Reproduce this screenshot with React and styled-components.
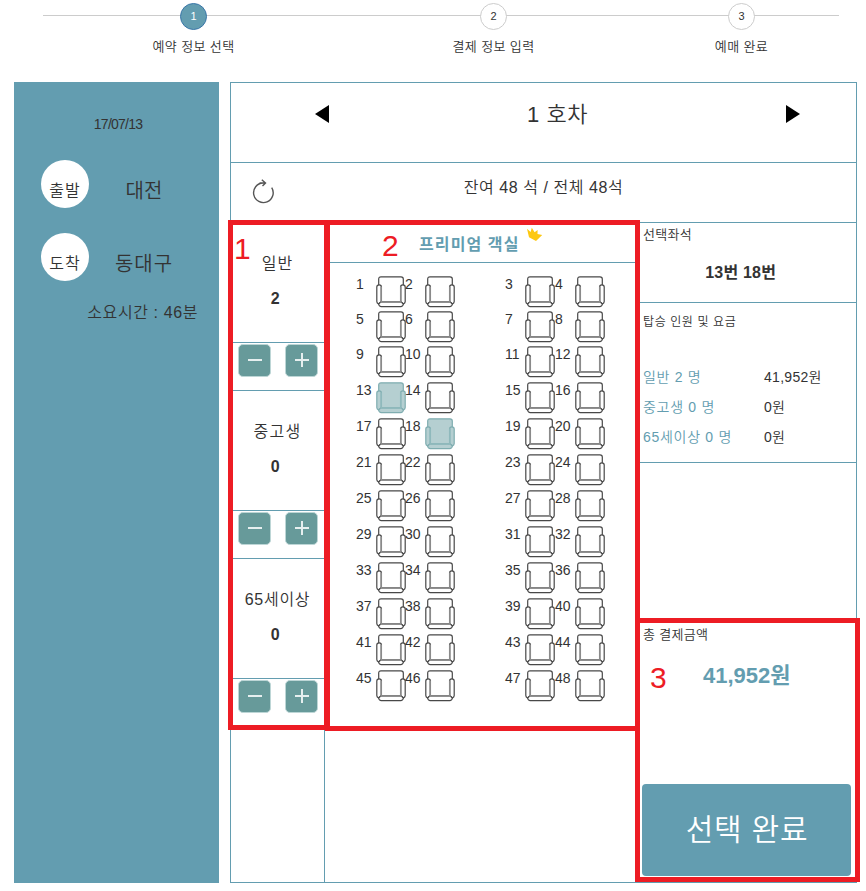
import React from "react";
import styled, { createGlobalStyle } from "styled-components";

const TEAL = "#639db0";
const RED = "#ed1c24";

const Global = createGlobalStyle`
  * { box-sizing: border-box; }
  body {
    margin: 0;
    background: #fff;
    color: #333;
    font-family: "Liberation Sans", "Noto Sans CJK KR", sans-serif;
    font-size: 14px;
    font-weight: 350;
  }
`;

const Page = styled.div`
  position: relative;
  width: 866px;
  height: 891px;
  overflow: hidden;
`;

const Label = styled.div`
  font-size: ${(p) => p.$size || 13}px;
  line-height: ${(p) => p.$line || 20}px;
  letter-spacing: ${(p) => p.$track || 0}px;
  font-weight: ${(p) => (p.$bold ? 700 : 350)};
  color: ${(p) => p.$color || "#333"};
  text-align: ${(p) => p.$align || "left"};
  white-space: pre;
`;

/* Progress steps */
const Stepper = styled.header`
  display: grid;
  grid-template-columns: 301px 299px 197px;
  height: 82px;
  margin: 0 26px 0 43px;
  padding-top: 3px;
  background: linear-gradient(#ccc, #ccc) 0 15px / 796px 1px no-repeat;
`;
const Step = styled.div`
  display: flex;
  flex-direction: column;
  align-items: center;
  gap: 7px;
`;
const StepDot = styled.div`
  width: 27px;
  height: 27px;
  border-radius: 50%;
  border: 1px solid ${(p) => (p.$active ? "#3a76a8" : "#ccc")};
  background: ${(p) => (p.$active ? TEAL : "#fff")};
  color: ${(p) => (p.$active ? "#fff" : "#333")};
  font-size: 11px;
  line-height: 25px;
  text-align: center;
`;

/* Body */
const Body = styled.main`
  display: flex;
  gap: 11px;
  margin-left: 14px;
  height: 801px;
`;
const Sidebar = styled.aside`
  width: 205px;
  background: ${TEAL};
  padding-top: 32px;
`;
const Stop = styled.div`
  display: flex;
  margin: ${(p) => p.$top}px 0 0 27px;
  height: 48px;
`;
const StopBadge = styled.div`
  width: 48px;
  height: 48px;
  border-radius: 50%;
  background: #fff;
  padding-top: 21px;
`;
const StopName = styled.div`
  width: 110px;
  padding-top: 19px;
`;
const Duration = styled.div`
  margin: 20px 21px 0 0;
`;

const Panel = styled.section`
  width: 627px;
  border: 1px solid ${TEAL};
  display: flex;
  flex-direction: column;
`;
const CarBar = styled.div`
  display: flex;
  justify-content: space-between;
  height: 80px;
  padding: 22px 56px 0 84px;
  border-bottom: 1px solid ${TEAL};
`;
const CarName = styled.div`
  padding-top: 1px;
`;
const Arrow = styled.svg`
  width: 14px;
  height: 18px;
`;
const SeatSummary = styled.div`
  display: flex;
  height: 60px;
  border-bottom: 1px solid ${TEAL};
  padding: 15px 0 0 20px;
`;
const RefreshIcon = styled.svg`
  width: 24px;
  height: 28px;
  margin-top: -1px;
`;
const SummaryText = styled.div`
  width: 537px;
`;
const Columns = styled.div`
  display: grid;
  grid-template-columns: 94px 314px 1fr;
  flex: 1;
`;
const PassengerCol = styled.div`
  border-right: 1px solid ${TEAL};
`;
const Passenger = styled.div`
  height: 120px;
  padding: 30px 0 0;
  border-bottom: 1px solid ${TEAL};
`;
const CounterRow = styled.div`
  display: flex;
  gap: 14px;
  height: 48px;
  padding: 1px 0 0 7px;
  border-bottom: 1px solid ${TEAL};
`;
const CounterButton = styled.button`
  width: 33px;
  height: 33px;
  border: 1px solid #bdd6d6;
  border-radius: 5px;
  background: #679a9a;
  padding: 0 0 1px;
  display: grid;
  place-items: center;
`;
const CarCol = styled.div`
  border-right: 1px solid ${TEAL};
`;
const CarTitle = styled.div`
  display: flex;
  height: 40px;
  padding: 12px 0 0 94px;
  gap: 7px;
  border-bottom: 1px solid ${TEAL};
`;
const Crown = styled.svg`
  width: 18px;
  height: 16px;
  margin-top: -8px;
`;
const SeatGrid = styled.div`
  display: grid;
  grid-template-columns: 49px 100px 50px 50px;
  grid-template-rows: 35px 35px repeat(10, 36px);
  padding: 13px 0 0 31px;
`;
const SeatCell = styled.div`
  display: grid;
  grid-template-columns: 20px 30px;
  height: 32px;
  font-size: 14px;
  line-height: 17px;
`;
const SeatSvg = styled.svg`
  width: 30px;
  height: 32px;
`;

const InfoCol = styled.div`
  display: flex;
  flex-direction: column;
`;
const Block = styled.div`
  height: ${(p) => p.$h}px;
  padding: ${(p) => p.$top || 2}px 0 0 4px;
  border-bottom: ${(p) => (p.$line ? `1px solid ${TEAL}` : "0")};
`;
const PickedSeats = styled.div`
  margin-right: 13px;
`;
const FareRow = styled.div`
  display: grid;
  grid-template-columns: 121px 1fr;
  height: 30px;
`;
const Fares = styled.div`
  padding-top: 29px;
`;
const Total = styled.div`
  padding: 16px 0 0 60px;
`;
const Submit = styled.button`
  display: block;
  width: 209px;
  height: 92px;
  margin: 0 0 0 3px;
  padding: 0 0 0 1px;
  border: 0;
  border-radius: 4px;
  background: ${TEAL};
  font-family: inherit;
`;

/* Callouts lie over the page */
const Callout = styled.div`
  position: absolute;
  left: ${(p) => p.$x}px;
  top: ${(p) => p.$y}px;
  width: ${(p) => p.$w}px;
  height: ${(p) => p.$h}px;
  border: 5px solid ${RED};
  pointer-events: none;
`;
const CalloutNumber = styled.span`
  position: absolute;
  left: ${(p) => p.$x}px;
  top: ${(p) => p.$y}px;
  color: ${RED};
  font-size: 30px;
  line-height: 30px;
`;

const Seat = ({ n }) => {
  const taken = n === 13 || n === 18;
  const dark = taken ? "#7fadb0" : "#484848";
  const soft = taken ? "#8fb9bc" : "#8a8a8a";
  const fill = taken ? "#b5cfd1" : "#fff";
  return (
    <SeatCell>
      <span>{n}</span>
      <SeatSvg viewBox="0 0 30 32" fill={fill} stroke={dark} strokeWidth="1.2">
        <path d="M2.7 9V3Q2.7.8 5 .8H25Q27.3.8 27.3 3V27H2.7Z" />
        <path d="M5.4 25.4V11Q5.4 8.8 3.2 8.8Q.8 8.8.8 11V25.5Q.8 27 2.5 28L5.4 25.4Z" />
        <path d="M24.6 25.4V11Q24.6 8.8 26.8 8.8Q29.2 8.8 29.2 11V25.5Q29.2 27 27.5 28L24.6 25.4Z" />
        <path d="M5 25.9H25L27.4 28Q27 30.6 24.7 30.6H5.3Q3 30.6 2.6 28Z" />
        <path d="M5.2 10.5V26H24.8V10.5" fill="none" stroke={soft} strokeWidth="1.7" />
      </SeatSvg>
    </SeatCell>
  );
};

const PASSENGERS = [
  { name: "일반", count: 2, track: 1, price: "41,952원" },
  { name: "중고생", count: 0, track: 1.2, price: "0원" },
  { name: "65세이상", count: 0, track: 0.7, price: "0원" },
];
const STEPS = ["예약 정보 선택", "결제 정보 입력", "예매 완료"];

export default function App() {
  return (
    <Page>
      <Global />
      <Stepper>
        {STEPS.map((s, i) => (
          <Step key={s}>
            <StepDot $active={i === 0}>{i + 1}</StepDot>
            <Label $track={0.4}>{s}</Label>
          </Step>
        ))}
      </Stepper>
      <Body>
        <Sidebar>
          <Label $size={14} $align="center" $track={-0.75}>{" 17/07/13"}</Label>
          <Stop $top={26}>
            <StopBadge><Label $size={16} $align="center" $track={1}>출발</Label></StopBadge>
            <StopName><Label $size={20} $line={24} $align="center">대전</Label></StopName>
          </Stop>
          <Stop $top={25}>
            <StopBadge><Label $size={16} $align="center" $track={1}>도착</Label></StopBadge>
            <StopName><Label $size={20} $line={24} $align="center" $track={1}>동대구</Label></StopName>
          </Stop>
          <Duration>
            <Label $size={16} $line={24} $align="right" $track={0.6}>소요시간 : 46분</Label>
          </Duration>
        </Sidebar>
        <Panel>
          <CarBar>
            <Arrow viewBox="0 0 14 18"><path d="M14 0V18L0 9Z" fill="#000" /></Arrow>
            <CarName><Label $size={22} $line={18} $track={0.5}>1 호차</Label></CarName>
            <Arrow viewBox="0 0 14 18"><path d="M0 0V18L14 9Z" fill="#000" /></Arrow>
          </CarBar>
          <SeatSummary>
            <RefreshIcon viewBox="0 0 24 28" fill="none" stroke="#555" strokeWidth="1.4">
              <path d="M12 6A9.8 9.8 0 1 0 20.7 10.6M8.5 6H14.5M10.8 2.8L14.5 6L11.5 9" />
            </RefreshIcon>
            <SummaryText>
              <Label $size={16} $align="center" $track={0.55}>잔여 48 석 / 전체 48석</Label>
            </SummaryText>
          </SeatSummary>
          <Columns>
            <PassengerCol>
              {PASSENGERS.map((p) => (
                <React.Fragment key={p.name}>
                  <Passenger>
                    <Label $size={16} $line={22} $align="center" $track={p.track}>{p.name}</Label>
                    <Label $size={16} $line={48} $align="center" $bold>{p.count + " "}</Label>
                  </Passenger>
                  <CounterRow>
                    <CounterButton aria-label="빼기">
                      <svg width="16" height="16" stroke="#e6efef" strokeWidth="2"><path d="M1 8H15" /></svg>
                    </CounterButton>
                    <CounterButton aria-label="더하기">
                      <svg width="16" height="16" stroke="#e6efef" strokeWidth="2"><path d="M1 8H15M8 1V15" /></svg>
                    </CounterButton>
                  </CounterRow>
                </React.Fragment>
              ))}
            </PassengerCol>
            <CarCol>
              <CarTitle>
                <Label $size={16} $bold $color={TEAL} $track={1.1}>프리미엄 객실</Label>
                <Crown viewBox="0 0 18 16">
                  <path d="M1 1.8L4.6 5L5.8 .8L8.6 5.2L11.6 3L11.5 7L16.2 8L10 14L3 10.2Z" fill="#fdc811" />
                </Crown>
              </CarTitle>
              <SeatGrid>
                {Array.from({ length: 48 }, (_, i) => <Seat key={i} n={i + 1} />)}
              </SeatGrid>
            </CarCol>
            <InfoCol>
              <Block $h={80} $line>
                <Label $track={0.3}>선택좌석</Label>
                <PickedSeats>
                  <Label $size={16} $line={56} $align="center" $track={0.2} $bold>{"13번 18번 "}</Label>
                </PickedSeats>
              </Block>
              <Block $h={160} $top={3} $line>
                <Label $size={12} $line={32} $track={0.6}>탑승 인원 및 요금</Label>
                <Fares>
                  {PASSENGERS.map((p) => (
                    <FareRow key={p.name}>
                      <Label $size={14} $color={TEAL} $track={0.7}>{`${p.name} ${p.count} 명`}</Label>
                      <Label $size={14} $track={0.3}>{p.price}</Label>
                    </FareRow>
                  ))}
                </Fares>
              </Block>
              <Block $h={321} $top={162}>
                <Label $size={13} $track={0.3}>총 결제금액</Label>
                <Total>
                  <Label $size={22} $line={30} $color={TEAL} $bold>41,952원</Label>
                </Total>
              </Block>
              <Submit><Label $size={30} $line={40} $align="center" $color="#fff" $track={0.8}>선택 완료</Label></Submit>
            </InfoCol>
          </Columns>
        </Panel>
      </Body>
      <Callout $x={228} $y={220} $w={101} $h={510} />
      <Callout $x={325} $y={220} $w={315} $h={511} />
      <Callout $x={635} $y={618} $w={225} $h={264} />
      <CalloutNumber $x={234} $y={234}>1</CalloutNumber>
      <CalloutNumber $x={382} $y={231}>2</CalloutNumber>
      <CalloutNumber $x={650} $y={663}>3</CalloutNumber>
    </Page>
  );
}
